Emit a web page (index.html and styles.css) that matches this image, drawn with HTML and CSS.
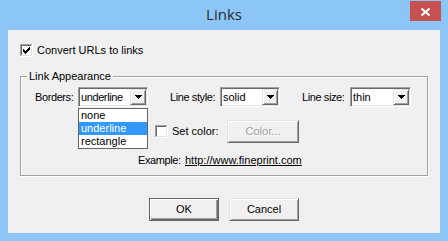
FILE: index.html
```html
<!DOCTYPE html>
<html>
<head>
<meta charset="utf-8">
<link rel="stylesheet" href="styles.css">
</head>
<body>
<div class="window">
  <div class="titlebar">
    <span></span>
    <span class="title">Links</span>
    <span class="close"><svg width="9" height="8" viewBox="0 0 9 8"><path d="M0.5 0.5L8.5 7.5M8.5 0.5L0.5 7.5" stroke="#fff" stroke-width="2" fill="none"/></svg></span>
  </div>
  <div class="client">
    <div class="check-row">
      <svg class="checkbox" width="13" height="13" viewBox="0 0 13 13" shape-rendering="crispEdges">
        <rect x="0" y="0" width="13" height="13" fill="#fff"/>
        <rect x="0" y="0" width="12" height="1" fill="#a0a0a0"/>
        <rect x="0" y="0" width="1" height="12" fill="#a0a0a0"/>
        <rect x="1" y="1" width="10" height="1" fill="#696969"/>
        <rect x="1" y="1" width="1" height="10" fill="#696969"/>
        <rect x="1" y="11" width="11" height="1" fill="#e3e3e3"/>
        <rect x="11" y="1" width="1" height="11" fill="#e3e3e3"/>
        <path d="M3 5v3h1v1h1v1h1v-1h1v-1h1v-1h1v-1h1v-3h-1v1h-1v1h-1v1h-1v1h-1v-1h-1v-1z" fill="#000"/>
      </svg>
      <span class="lbl">Convert URLs to links</span>
    </div>
    <fieldset class="group">
      <legend>Link Appearance</legend>
      <div class="row row-combos">
        <span class="lbl tight w-borders">Borders:</span>
        <div class="combo w70">
          <span class="combo-text tight">underline</span>
          <span class="arrow"><svg width="7" height="4" viewBox="0 0 7 4" shape-rendering="crispEdges"><path d="M0 0h7v1h-1v1h-1v1h-1v1h-1v-1h-1v-1h-1v-1h-1z" fill="#000"/></svg></span>
          <ul class="dropdown">
            <li>none</li>
            <li class="sel">underline</li>
            <li>rectangle</li>
          </ul>
        </div>
        <span class="lbl tight w-style gap">Line style:</span>
        <div class="combo w60">
          <span class="combo-text">solid</span>
          <span class="arrow"><svg width="7" height="4" viewBox="0 0 7 4" shape-rendering="crispEdges"><path d="M0 0h7v1h-1v1h-1v1h-1v1h-1v-1h-1v-1h-1v-1h-1z" fill="#000"/></svg></span>
        </div>
        <span class="lbl tight w-size gap">Line size:</span>
        <div class="combo w61">
          <span class="combo-text">thin</span>
          <span class="arrow"><svg width="7" height="4" viewBox="0 0 7 4" shape-rendering="crispEdges"><path d="M0 0h7v1h-1v1h-1v1h-1v1h-1v-1h-1v-1h-1v-1h-1z" fill="#000"/></svg></span>
        </div>
      </div>
      <div class="row row-color">
        <svg class="checkbox" width="13" height="13" viewBox="0 0 13 13" shape-rendering="crispEdges">
          <rect x="0" y="0" width="13" height="13" fill="#fff"/>
          <rect x="0" y="0" width="12" height="1" fill="#a0a0a0"/>
          <rect x="0" y="0" width="1" height="12" fill="#a0a0a0"/>
          <rect x="1" y="1" width="10" height="1" fill="#696969"/>
          <rect x="1" y="1" width="1" height="10" fill="#696969"/>
          <rect x="1" y="11" width="11" height="1" fill="#e3e3e3"/>
          <rect x="11" y="1" width="1" height="11" fill="#e3e3e3"/>
        </svg>
        <span class="lbl w-setcolor">Set color:</span>
        <span class="btn btn-color disabled">Color...</span>
      </div>
      <div class="row row-example">
        <span class="lbl tight w-example">Example:</span>
        <a class="link">http://www.fineprint.com</a>
      </div>
    </fieldset>
    <div class="buttons">
      <span class="btn btn-default">OK</span>
      <span class="btn">Cancel</span>
    </div>
  </div>
</div>
</body>
</html>
```
FILE: styles.css
```css
html, body {
  margin: 0;
  padding: 0;
}
body {
  background: #8cc6f7;
  font-family: "Liberation Sans", Arial, sans-serif;
  font-size: 11px;
  color: #000;
}
.window {
  width: 448px;
  height: 241px;
  display: flex;
  flex-direction: column;
  background: #8cc6f7;
}
.titlebar {
  height: 30px;
  display: grid;
  grid-template-columns: 1fr auto 1fr;
}
.title {
  font-family: "Open Sans", "Noto Sans", sans-serif;
  font-size: 15px;
  line-height: 29px;
  color: #2b2b2b;
}
.close {
  justify-self: end;
  align-self: start;
  margin: 1px 7px 0 0;
  width: 31px;
  height: 20px;
  background: #c75050;
  display: flex;
  align-items: center;
  justify-content: center;
}
.close svg { display: block; margin-top: 1px; }
.client {
  flex: 1;
  margin: 0 8px 8px 8px;
  background: #f0f0f0;
  display: flex;
  flex-direction: column;
  padding-top: 14px;
}
.check-row {
  display: flex;
  align-items: center;
  gap: 4px;
  margin-left: 12px;
  height: 13px;
}
.checkbox { display: block; flex: none; }
.lbl {
  line-height: 13px;
  white-space: nowrap;
}
.tight { letter-spacing: -0.4px; }
.group {
  margin: 13px 0 0 12px;
  width: 408px;
  box-sizing: border-box;
  border: 1px solid #a0a0a0;
  box-shadow: inset 1px 1px 0 #fff, 1px 1px 0 #fff;
  padding: 4px 0 8px 0;
  min-width: 0;
}
.group legend {
  margin-left: 6px;
  padding: 0 2px;
  line-height: 13px;
  background: #f0f0f0;
}
.row {
  display: flex;
  align-items: center;
}
.row-combos {
  height: 20px;
  padding-left: 14px;
}
.w-borders { width: 43px; flex: none; }
.w-style { width: 50px; flex: none; }
.w-size { width: 48px; flex: none; }
.gap { margin-left: 22px; }
.combo {
  position: relative;
  flex: none;
  height: 20px;
  box-sizing: border-box;
  background: #fff;
  border: 1px solid;
  border-color: #a0a0a0 #fff #fff #a0a0a0;
  box-shadow: inset 1px 1px 0 #696969, inset -1px -1px 0 #e3e3e3;
  padding: 1px;
  display: flex;
  align-items: center;
}
.w70 { width: 70px; }
.w60 { width: 60px; }
.w61 { width: 61px; }
.combo-text {
  flex: 1;
  padding-left: 1px;
  line-height: 13px;
  white-space: nowrap;
  overflow: hidden;
}
.arrow {
  flex: none;
  width: 16px;
  height: 16px;
  box-sizing: border-box;
  background: #f0f0f0;
  border: 1px solid;
  border-color: #e3e3e3 #696969 #696969 #e3e3e3;
  box-shadow: inset 1px 1px 0 #fff, inset -1px -1px 0 #a0a0a0;
  display: flex;
  align-items: center;
  justify-content: center;
}
.arrow svg { display: block; margin-left: 1px; }
.dropdown {
  position: absolute;
  top: 20px;
  left: -1px;
  width: 70px;
  box-sizing: border-box;
  margin: 0;
  padding: 0;
  list-style: none;
  background: #fff;
  border: 1px solid #646464;
  z-index: 5;
}
.dropdown li {
  line-height: 13px;
  height: 13px;
  padding-left: 2px;
}
.dropdown li.sel {
  background: #3399ff;
  color: #fff;
}
.row-color {
  height: 23px;
  margin-top: 13px;
  padding-left: 134px;
  gap: 4px;
}
.w-setcolor { width: 51px; flex: none; }
.btn {
  width: 70px;
  height: 23px;
  box-sizing: border-box;
  background: #f0f0f0;
  border: 1px solid;
  border-color: #e3e3e3 #696969 #696969 #e3e3e3;
  box-shadow: inset 1px 1px 0 #fff, inset -1px -1px 0 #a0a0a0;
  display: flex;
  align-items: center;
  justify-content: center;
  line-height: 13px;
}
.btn-color { width: 72px; }
.btn.disabled {
  color: #a0a0a0;
  text-shadow: 1px 1px 0 #fff;
}
.btn-default {
  border-color: #646464;
  box-shadow: inset 1px 1px 0 #fff, inset -1px -1px 0 #696969, inset -2px -2px 0 #a0a0a0;
}
.row-example {
  height: 13px;
  margin-top: 11px;
  padding-left: 117px;
}
.w-example { width: 47px; flex: none; }
.link {
  color: #000;
  text-decoration: underline;
  line-height: 13px;
}
.buttons {
  display: flex;
  justify-content: center;
  gap: 10px;
  margin-top: 22px;
}
```
